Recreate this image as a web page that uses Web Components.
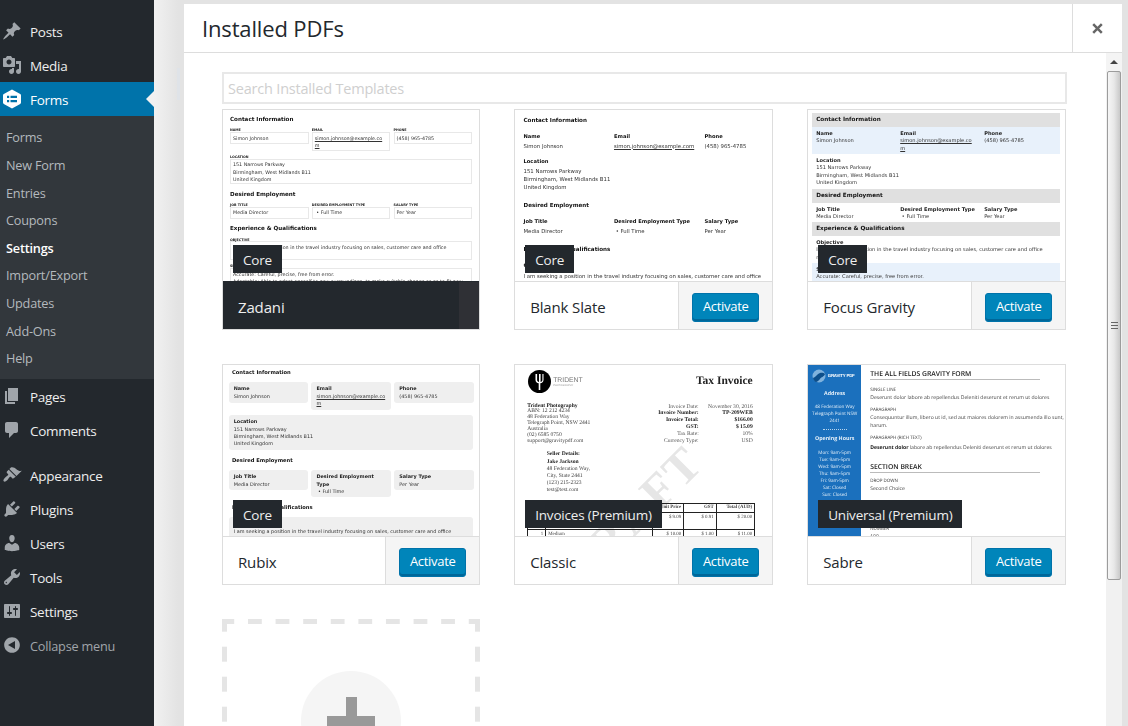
<!DOCTYPE html>
<html>
<head>
<meta charset="utf-8">
<title>Installed PDFs</title>
<style>
  html, body { margin: 0; height: 100%; overflow: hidden; }
  body { display: flex; font-family: "Open Sans", sans-serif; background: #e4e4e4; }
</style>
</head>
<body>
<wp-sidebar>
  <wp-menu-item icon="posts">Posts</wp-menu-item>
  <wp-menu-item icon="media">Media</wp-menu-item>
  <wp-menu-item icon="forms" current>Forms</wp-menu-item>
  <wp-submenu>
    <wp-submenu-item>Forms</wp-submenu-item>
    <wp-submenu-item>New Form</wp-submenu-item>
    <wp-submenu-item>Entries</wp-submenu-item>
    <wp-submenu-item>Coupons</wp-submenu-item>
    <wp-submenu-item current>Settings</wp-submenu-item>
    <wp-submenu-item>Import/Export</wp-submenu-item>
    <wp-submenu-item>Updates</wp-submenu-item>
    <wp-submenu-item>Add-Ons</wp-submenu-item>
    <wp-submenu-item>Help</wp-submenu-item>
  </wp-submenu>
  <wp-menu-item icon="pages">Pages</wp-menu-item>
  <wp-menu-item icon="comments" last>Comments</wp-menu-item>
  <wp-menu-item icon="appearance">Appearance</wp-menu-item>
  <wp-menu-item icon="plugins">Plugins</wp-menu-item>
  <wp-menu-item icon="users">Users</wp-menu-item>
  <wp-menu-item icon="tools">Tools</wp-menu-item>
  <wp-menu-item icon="settings">Settings</wp-menu-item>
  <wp-menu-item icon="collapse" muted>Collapse menu</wp-menu-item>
</wp-sidebar>

<pdf-backdrop>
  <pdf-modal heading="Installed PDFs">
    <pdf-search placeholder="Search Installed Templates"></pdf-search>
    <pdf-grid>
      <pdf-card name="Zadani" tag="Core" active><pdf-doc layout="zadani"></pdf-doc></pdf-card>
      <pdf-card name="Blank Slate" tag="Core"><pdf-doc layout="blank"></pdf-doc></pdf-card>
      <pdf-card name="Focus Gravity" tag="Core"><pdf-doc layout="focus"></pdf-doc></pdf-card>
      <pdf-card name="Rubix" tag="Core"><pdf-doc layout="rubix"></pdf-doc></pdf-card>
      <pdf-card name="Classic" tag="Invoices (Premium)"><pdf-doc layout="classic"></pdf-doc></pdf-card>
      <pdf-card name="Sabre" tag="Universal (Premium)"><pdf-doc layout="sabre"></pdf-doc></pdf-card>
      <pdf-add></pdf-add>
    </pdf-grid>
  </pdf-modal>
</pdf-backdrop>

<script>
const ICONS = {
  posts: 'M10.44 3.02l1.82-1.82 6.36 6.35-1.83 1.82c-1.05-.68-2.48-.57-3.41.36l-.75.75c-.92.93-1.04 2.35-.35 3.41l-1.83 1.82-2.41-2.41-2.8 2.79c-.42.42-3.38 2.71-3.8 2.29s1.86-3.39 2.28-3.81l2.79-2.79L4.1 9.36l1.83-1.82c1.05.69 2.48.57 3.4-.36l.75-.75c.93-.92 1.05-2.35.36-3.41z',
  media: 'M13 11V4c0-.55-.45-1-1-1h-1.67L9 1H5L3.67 3H2c-.55 0-1 .45-1 1v7c0 .55.45 1 1 1h10c.55 0 1-.45 1-1zM7 4.5c1.38 0 2.5 1.12 2.5 2.5S8.38 9.5 7 9.5 4.5 8.38 4.5 7 5.62 4.5 7 4.5zM14 6h5v10.5c0 1.38-1.12 2.5-2.5 2.5S14 17.88 14 16.5s1.12-2.5 2.5-2.5c.17 0 .34.02.5.05V9h-3V6zm-4 8.05V13h2v3.5c0 1.38-1.12 2.5-2.5 2.5S7 17.88 7 16.5 8.12 14 9.5 14c.17 0 .34.02.5.05z',
  forms: 'M10 0.5 L18.2 5 Q19 5.5 19 6.4 V13.6 Q19 14.5 18.2 15 L10 19.5 L1.8 15 Q1 14.5 1 13.6 V6.4 Q1 5.5 1.8 5 Z M5 6.8 V9 H7.2 V6.8 Z M8.5 6.8 V9 H15 V6.8 Z M5 11 V13.2 H7.2 V11 Z M8.5 11 V13.2 H15 V11 Z',
  pages: 'M6 15V2h10v13H6zm-1 1h8v2H3V5h2v11z',
  comments: 'M5 2h9c1.1 0 2 .9 2 2v7c0 1.1-.9 2-2 2h-2l-5 5v-5H5c-1.1 0-2-.9-2-2V4c0-1.1.9-2 2-2z',
  appearance: 'M14.48 11.06L7.41 3.99l1.5-1.5c.5-.56 2.3-.47 3.51.32 1.21.8 1.43 1.28 2.91 2.1 1.18.64 2.45 1.26 4.45.85zm-.71.71L6.7 4.7 4.93 6.47c-.39.39-.39 1.02 0 1.41l1.06 1.06c.39.39.39 1.03 0 1.42-.6.6-1.43 1.11-2.21 1.69-.35.26-.7.53-1.01.84-1.34 1.34-1.72 2.75-1.03 3.44.69.69 2.1.31 3.44-1.03.31-.31.58-.66.85-1.01.58-.78 1.09-1.61 1.69-2.21.39-.39 1.02-.39 1.41 0l1.06 1.06c.39.39 1.02.39 1.41 0z',
  plugins: 'M13.11 4.36L9.87 7.6 8 5.73l3.24-3.24c.35-.34 1.05-.2 1.56.32.52.51.66 1.21.31 1.55zm-8 1.77l.91-1.12 9.01 9.01-1.19.84c-.71.71-2.63 1.16-3.82 1.16H6.14L4.9 17.26c-.59.59-1.54.59-2.12 0-.59-.58-.59-1.53 0-2.12l1.24-1.24v-3.88c0-1.13.4-3.19 1.09-3.89zm7.26 3.97l3.24-3.24c.34-.35 1.04-.21 1.55.31.52.51.66 1.21.31 1.55l-3.24 3.25z',
  users: 'M10 9.25c-2.27 0-2.73-3.44-2.73-3.44C7 4.02 7.82 2 9.96 2c2.15 0 2.97 2.02 2.7 3.81 0 0-.39 3.44-2.66 3.44zm0 2.57L12.72 10c2.39 0 4.52 2.33 4.52 4.53v2.49s-3.65 1.13-7.24 1.13c-3.65 0-7.24-1.13-7.24-1.13v-2.49c0-2.25 1.94-4.48 4.47-4.48z',
  tools: 'M16.68 9.77c-1.34 1.34-3.3 1.67-4.95.99l-5.41 6.52c-.99.99-2.59.99-3.57 0-.99-.98-.99-2.58 0-3.57l6.52-5.42c-.68-1.65-.35-3.61.99-4.95 1.28-1.28 3.12-1.62 4.72-1.06l-2.89 2.89 2.82 2.82 2.86-2.87c.53 1.58.18 3.39-1.09 4.65zM4.74 15.95c.27-.27.27-.71 0-.98s-.71-.27-.98 0-.27.71 0 .98.71.27.98 0z',
  settings: 'M18 16V4c0-.55-.45-1-1-1H3c-.55 0-1 .45-1 1v12c0 .55.45 1 1 1h14c.55 0 1-.45 1-1zM8 11h1c.55 0 1 .45 1 1s-.45 1-1 1H8v1.5c0 .28-.22.5-.5.5s-.5-.22-.5-.5V13H6c-.55 0-1-.45-1-1s.45-1 1-1h1V5.5c0-.28.22-.5.5-.5s.5.22.5.5V11zm5-2h-1c-.55 0-1-.45-1-1s.45-1 1-1h1V5.5c0-.28.22-.5.5-.5s.5.22.5.5V7h1c.55 0 1 .45 1 1s-.45 1-1 1h-1v5.5c0 .28-.22.5-.5.5s-.5-.22-.5-.5V9z',
  collapse: 'M10 2.16c4.33 0 7.84 3.51 7.84 7.84S14.33 17.84 10 17.84 2.16 14.33 2.16 10 5.67 2.16 10 2.16zm3 11.84V6l-7 4z'
};

class WpSidebar extends HTMLElement {
  constructor() {
    super();
    this.attachShadow({ mode: 'open' });
    this.shadowRoot.innerHTML = `
      <style>
        :host { display: block; flex: none; width: 154px; height: 100%; padding-top: 14px; box-sizing: border-box; background: #23282d; }
      </style>
      <slot></slot>`;
  }
}

class WpMenuItem extends HTMLElement {
  constructor() {
    super();
    this.attachShadow({ mode: 'open' });
    const icon = ICONS[this.getAttribute('icon')];
    this.shadowRoot.innerHTML = `
      <style>
        :host { display: flex; align-items: flex-start; height: 34px; position: relative; color: #eee; font: 13.5px/36px "Open Sans", sans-serif; letter-spacing: -.3px; }
        :host([last]) { margin-bottom: 11px; }
        :host([current]) { background: #0073aa; color: #fff; }
        :host([muted]) { color: #a0a5aa; font-size: 12.7px; letter-spacing: -.2px; }
        svg { flex: none; width: 20px; height: 20px; margin: 7px 8px 0 2px; fill: #a0a5aa; fill-rule: evenodd; }
        :host([current]) svg { fill: #fff; }
        :host([current])::after { content: ""; position: absolute; right: 0; top: 9px; border: 8px solid transparent; border-right-color: #f1f1f1; border-left-width: 0; }
      </style>
      <svg viewBox="0 0 20 20"><path d="${icon}"/></svg><slot></slot>`;
  }
}

class WpSubmenu extends HTMLElement {
  constructor() {
    super();
    this.attachShadow({ mode: 'open' });
    this.shadowRoot.innerHTML = `
      <style>
        :host { display: block; padding: 7.4px 0 7.2px; background: #32373c; }
      </style>
      <slot></slot>`;
  }
}

class WpSubmenuItem extends HTMLElement {
  constructor() {
    super();
    this.attachShadow({ mode: 'open' });
    this.shadowRoot.innerHTML = `
      <style>
        :host { display: block; height: 27.6px; padding-left: 6px; color: #b4b9be; font: 12.7px/29.5px "Open Sans", sans-serif; letter-spacing: -.2px; }
        :host([current]) { color: #fff; font-weight: 600; }
      </style>
      <slot></slot>`;
  }
}

class PdfBackdrop extends HTMLElement {
  constructor() {
    super();
    this.attachShadow({ mode: 'open' });
    this.shadowRoot.innerHTML = `
      <style>
        :host { display: block; flex: 1; min-width: 0; height: 100%; padding: 4px 6px 0 30px; box-sizing: border-box; position: relative;
                background: linear-gradient(to right, #f1f1f1, #e3e3e3 24px); }
        .ghost { position: absolute; left: 23px; top: 68px; width: 3px; height: 32px; background: #dfe3e8; }
      </style>
      <div class="ghost"></div>
      <slot></slot>`;
  }
}

class PdfModal extends HTMLElement {
  constructor() {
    super();
    this.attachShadow({ mode: 'open' });
    this.shadowRoot.innerHTML = `
      <style>
        :host { display: flex; flex-direction: column; height: 100%; background: #fff; overflow: hidden; }
        header { flex: none; display: flex; height: 48px; border-bottom: 1px solid #ddd; }
        h1 { flex: 1; margin: 0; padding-left: 18px; font: 400 22px/48px "Open Sans", sans-serif; letter-spacing: -.15px; color: #23282d; }
        .close { flex: none; display: flex; align-items: center; justify-content: center; width: 49px; border-left: 1px solid #ddd; }
        .close svg { width: 11px; height: 11px; margin-right: 1px; }
        .body { flex: 1; min-height: 0; display: flex; }
        .content { flex: 1; min-width: 0; padding: 19px 39px 0 38px; overflow: hidden; }
      </style>
      <header>
        <h1>${this.getAttribute('heading')}</h1>
        <div class="close"><svg viewBox="0 0 11 11"><path d="M1.2 1.2l8.6 8.6M9.8 1.2l-8.6 8.6" stroke="#666" stroke-width="2.5" fill="none"/></svg></div>
      </header>
      <div class="body">
        <div class="content"><slot></slot></div>
        <classic-scrollbar></classic-scrollbar>
      </div>`;
  }
}

class ClassicScrollbar extends HTMLElement {
  constructor() {
    super();
    this.attachShadow({ mode: 'open' });
    this.shadowRoot.innerHTML = `
      <style>
        :host { display: block; flex: none; width: 16px; background: #f1f1f1; }
        .arrow { height: 18px; display: flex; align-items: center; justify-content: center; background: #f4f4f4; }
        .arrow i { border: 4px solid transparent; border-top-width: 0; border-bottom-color: #444; }
        .thumb { height: 509px; margin: 0 1px 0 1px; box-sizing: border-box; border: 1px solid #9c9c9c; border-radius: 2px;
                 background: linear-gradient(to right, #f6f6f6, #e8e8e8 50%, #c9c9c9);
                 display: flex; align-items: center; justify-content: center; }
        .grip { width: 7px; height: 7px; background: repeating-linear-gradient(to bottom, #666 0 1px, transparent 1px 3px); }
      </style>
      <div class="arrow"><i></i></div>
      <div class="thumb"><div class="grip"></div></div>`;
  }
}

class PdfSearch extends HTMLElement {
  constructor() {
    super();
    this.attachShadow({ mode: 'open' });
    this.shadowRoot.innerHTML = `
      <style>
        :host { display: block; margin-bottom: 5px; }
        input { display: block; width: 100%; height: 32px; box-sizing: border-box; padding: 1px 4px 0; margin: 0; border: 2px solid #e8e8e8; outline: 0; background: #fff;
                font: 14.5px "Open Sans", sans-serif; letter-spacing: -.2px; color: #333; }
        input::placeholder { color: #cfcfcf; opacity: 1; }
      </style>
      <input type="text" placeholder="${this.getAttribute('placeholder')}">`;
  }
}

class PdfGrid extends HTMLElement {
  constructor() {
    super();
    this.attachShadow({ mode: 'open' });
    this.shadowRoot.innerHTML = `
      <style>
        :host { display: grid; grid-template-columns: 258.2px 259px 259px; column-gap: 34px; row-gap: 34px; }
      </style>
      <slot></slot>`;
  }
}

class PdfCard extends HTMLElement {
  constructor() {
    super();
    this.attachShadow({ mode: 'open' });
    const active = this.hasAttribute('active');
    this.shadowRoot.innerHTML = `
      <style>
        :host { display: flex; flex-direction: column; height: 221px; box-sizing: border-box; border: 1px solid #ddd; background: #fff; overflow: hidden; }
        .thumb { flex: none; height: 171px; position: relative; overflow: hidden; }
        .tag { position: absolute; left: 10px; top: 135px; height: 28px; padding: 0 10px; background: #23282d; color: #eee; font: 13.5px/30px "Open Sans", sans-serif; letter-spacing: -.2px; white-space: nowrap; }
        footer { flex: 1; display: flex; border-top: 1px solid #ddd; }
        .name { flex: 1; padding-left: 15px; font: 15px/50px "Open Sans", sans-serif; letter-spacing: -.15px; color: #23282d; }
        .actions { flex: none; display: flex; align-items: center; justify-content: center; width: 93px; border-left: 1px solid #ddd; background: #f5f5f5; }
        button { width: 67px; height: 29px; padding: 0 0 2px; margin: 0; border: 1px solid #0073aa; border-radius: 3px; background: #0085ba; box-shadow: inset 0 -2px 0 #006799;
                 color: #fff; font: 13px/25px "Open Sans", sans-serif; letter-spacing: -.3px; }
        :host([active]) footer { background: #23282d; border-top-color: #23282d; }
        :host([active]) .name { color: #eee; }
        :host([active]) .actions { width: 20px; border-left: 0; background: #2f3035; }
      </style>
      <div class="thumb">
        <slot></slot>
        <div class="tag">${this.getAttribute('tag')}</div>
      </div>
      <footer>
        <div class="name">${this.getAttribute('name')}</div>
        <div class="actions">${active ? '' : '<button>Activate</button>'}</div>
      </footer>`;
  }
}

class PdfAdd extends HTMLElement {
  constructor() {
    super();
    this.attachShadow({ mode: 'open' });
    // the dash rhythm is uneven between the sides, so gradients rather than border: dashed
    this.shadowRoot.innerHTML = `
      <style>
        :host { display: flex; justify-content: center; height: 221px; box-sizing: border-box; padding-top: 52px;
                background:
                  linear-gradient(to right, #e5e5e5 14px, transparent 14px) -1.6px 0 / 27.6px 5px repeat-x,
                  linear-gradient(to right, #e5e5e5 14px, transparent 14px) -1.6px 100% / 27.6px 5px repeat-x,
                  linear-gradient(to bottom, #e5e5e5 15px, transparent 15px) 0 -2.3px / 5px 30px repeat-y,
                  linear-gradient(to bottom, #e5e5e5 15px, transparent 15px) 100% -2.3px / 5px 30px repeat-y; }
        .circle { width: 100px; height: 100px; border-radius: 50%; background: #f5f5f5; display: flex; align-items: center; justify-content: center; }
        .plus { width: 48px; height: 48px; background:
                  linear-gradient(#999, #999) center / 11px 100% no-repeat,
                  linear-gradient(#999, #999) center / 100% 11px no-repeat; }
      </style>
      <div class="circle"><div class="plus"></div></div>`;
  }
}

const FIELDS = {
  email: 'simon.johnson@example.co<br>m',
  emailFull: 'simon.johnson@example.com',
  address: '151 Narrows Parkway<br>Birmingham, West Midlands B11<br>United Kingdom',
  seeking: 'I am seeking a position in the travel industry focusing on sales, customer care and office',
  accurate: 'Accurate: Careful, precise, free from error.'
};

const DOC_LAYOUTS = {
  zadani: () => `
    <div class="zadani">
      <h4 style="margin-top:5px">Contact Information</h4>
      <div class="row" style="margin-top:4.3px">
        <div class="f"><label>NAME</label><p>Simon Johnson</p></div>
        <div class="f"><label>EMAIL</label><p style="height:19px"><u>${FIELDS.email}</u></p></div>
        <div class="f"><label>PHONE</label><p>(458) 965-4785</p></div>
      </div>
      <label style="margin-top:3px">LOCATION</label>
      <p style="height:25.5px;width:242px">${FIELDS.address}</p>
      <h4 style="margin-top:6px">Desired Employment</h4>
      <div class="row" style="margin-top:4px">
        <div class="f"><label>JOB TITLE</label><p>Media Director</p></div>
        <div class="f"><label>DESIRED EMPLOYMENT TYPE</label><p>&nbsp;• Full Time</p></div>
        <div class="f"><label>SALARY TYPE</label><p>Per Year</p></div>
      </div>
      <h4 style="margin-top:5px">Experience &amp; Qualifications</h4>
      <label style="margin-top:4.7px">OBJECTIVE</label>
      <p style="height:19px;width:242px">${FIELDS.seeking}</p>
      <label style="margin-top:3px">SKILLS</label>
      <p style="width:242px;height:30px">${FIELDS.accurate}<br>Adaptable: Able to adapt oneself to new surroundings, to make suitable change so as to fit new</p>
    </div>`,

  blank: () => `
    <div class="blank">
      <h4 style="margin-top:6px">Contact Information</h4>
      <div class="row" style="margin-top:9px">
        <div class="c"><b>Name</b><span>Simon Johnson</span></div>
        <div class="c"><b>Email</b><span><u>${FIELDS.emailFull}</u></span></div>
        <div class="c"><b>Phone</b><span>(458) 965-4785</span></div>
      </div>
      <b style="margin-top:8px">Location</b>
      <span style="margin-top:2.5px;line-height:8px">${FIELDS.address}</span>
      <h4 style="margin-top:10px">Desired Employment</h4>
      <div class="row" style="margin-top:9px">
        <div class="c"><b>Job Title</b><span>Media Director</span></div>
        <div class="c"><b>Desired Employment Type</b><span>&nbsp;• Full Time</span></div>
        <div class="c"><b>Salary Type</b><span>Per Year</span></div>
      </div>
      <h4 style="margin-top:10.5px">Experience &amp; Qualifications</h4>
      <b style="margin-top:8.5px">Objective</b>
      <span style="margin-top:4px">${FIELDS.seeking}</span>
    </div>`,

  focus: () => `
    <div class="focus">
      <h4>Contact Information</h4>
      <div class="row tint" style="height:27px">
        <div class="c"><b>Name</b><span>Simon Johnson</span></div>
        <div class="c"><b>Email</b><span><u>${FIELDS.email}</u></span></div>
        <div class="c"><b>Phone</b><span>(458) 965-4785</span></div>
      </div>
      <div class="cell" style="height:35px"><b>Location</b><span>${FIELDS.address}</span></div>
      <h4>Desired Employment</h4>
      <div class="row" style="height:19px">
        <div class="c"><b>Job Title</b><span>Media Director</span></div>
        <div class="c"><b>Desired Employment Type</b><span>&nbsp;• Full Time</span></div>
        <div class="c"><b>Salary Type</b><span>Per Year</span></div>
      </div>
      <h4>Experience &amp; Qualifications</h4>
      <div class="cell" style="height:27px"><b>Objective</b><span>${FIELDS.seeking}<br>m</span></div>
      <div class="cell tint" style="height:20px"><b>Skills</b><span>${FIELDS.accurate}</span></div>
    </div>`,

  rubix: () => `
    <div class="rubix">
      <h4 style="margin-top:3px">Contact Information</h4>
      <div class="row" style="margin-top:6px">
        <div class="c" style="height:21px"><b>Name</b><span>Simon Johnson</span></div>
        <div class="c" style="height:28px"><b>Email</b><span><u>${FIELDS.email}</u></span></div>
        <div class="c" style="height:21px"><b>Phone</b><span>(458) 965-4785</span></div>
      </div>
      <div class="c wide" style="height:35px;margin-top:5px"><b>Location</b><span>${FIELDS.address}</span></div>
      <h4 style="margin-top:6px">Desired Employment</h4>
      <div class="row" style="margin-top:6px">
        <div class="c" style="height:20px"><b>Job Title</b><span>Media Director</span></div>
        <div class="c" style="height:27px"><b>Desired Employment Type</b><span>&nbsp;• Full Time</span></div>
        <div class="c" style="height:20px"><b>Salary Type</b><span>Per Year</span></div>
      </div>
      <h4 style="margin-top:5.5px">Experience &amp; Qualifications</h4>
      <div class="c wide" style="height:30px;margin-top:6.5px"><b>Objective</b><span>${FIELDS.seeking}</span></div>
    </div>`,

  classic: () => `
    <div class="classic">
      <div class="watermark">DRAFT</div>
      <div class="head">
        <svg class="logo" viewBox="0 0 23 23">
          <circle cx="11.5" cy="11.5" r="11.5" fill="#000"/>
          <path d="M7.5 4v6c0 2 1.5 3 3.2 3.3V20h1.6v-6.7c1.7-.3 3.2-1.3 3.2-3.3V4h-1.1v6c0 1-.8 1.7-1.8 2V4h-1.6v8c-1-.3-1.9-1-1.9-2V4z" fill="#fff" stroke="none"/>
        </svg>
        <div class="brand">TRIDENT<small>PHOTOGRAPHY</small></div>
        <div class="title">Tax Invoice</div>
      </div>
      <div class="meta">
        <div class="addr"><b>Trident Photography</b><br>ABN: 12 212 4234<br>48 Federation Way<br>Telegraph Point, NSW 2441<br>Australia<br>(02) 6585 0750<br>support@gravitypdf.com</div>
        <div class="inv">
          <span>Invoice Date:</span><span>November 30, 2016</span>
          <b>Invoice Number:</b><b>TP-209WEB</b>
          <b>Invoice Total:</b><b>$166.00</b>
          <b>GST:</b><b>$ 15.09</b>
          <span>Tax Rate:</span><span>10%</span>
          <span>Currency Type:</span><span>USD</span>
        </div>
      </div>
      <div class="seller"><b>Seller Details:</b><br><b>Jake Jackson</b><br>48 Federation Way,<br>City, State 2441<br>(123) 215-2323<br>test@test.com</div>
      <table>
        <colgroup><col style="width:18.4px"><col style="width:107px"><col style="width:31px"><col style="width:32.5px"><col style="width:38.5px"></colgroup>
        <tr style="height:9.3px"><th>Qty</th><th>Description</th><th class="r">Unit Price</th><th class="r">GST</th><th class="r">Total (AUD)</th></tr>
        <tr style="height:16.7px;vertical-align:top"><td class="r">2</td><td>Small</td><td class="r">$ 9.09</td><td class="r">$ 0.91</td><td class="r">$ 20.00</td></tr>
        <tr style="height:12px;vertical-align:top"><td class="r">1</td><td>Medium</td><td class="r">$ 10.00</td><td class="r">$ 1.00</td><td class="r">$ 11.00</td></tr>
      </table>
    </div>`,

  sabre: () => `
    <div class="sabre">
      <aside>
        <div class="mark">
          <svg viewBox="0 0 14 14"><circle cx="7" cy="7" r="6.5" fill="#7fb2dd"/><path d="M1 9c3-1 4-4 7-5 2-.7 4 0 5 1-1 3-4 3-5 5-1 1.5-3 3-4 3C2.5 12.5 1.5 11 1 9z" fill="#0d4f8b"/></svg>
          <b>GRAVITY PDF</b>
        </div>
        <strong style="margin-top:6.5px">Address</strong>
        <p style="margin-top:7.5px">48 Federation Way<br>Telegraph Point NSW<br>2441</p>
        <hr>
        <strong style="margin-top:4.5px">Opening Hours</strong>
        <p style="margin-top:8px">Mon: 9am-5pm<br>Tue: 9am-5pm<br>Wed: 9am-5pm<br>Thu: 9am-5pm<br>Fri: 9am-5pm<br>Sat: Closed<br>Sun: Closed</p>
      </aside>
      <main>
        <h5 style="margin-top:5px">THE ALL FIELDS GRAVITY FORM</h5>
        <label style="margin-top:7px">SINGLE LINE</label>
        <p style="margin-top:1.5px">Deserunt dolor labore ab repellendus Deleniti deserunt et rerum ut dolores</p>
        <label style="margin-top:6.5px">PARAGRAPH</label>
        <p style="margin-top:1px;line-height:8px">Consequuntur illum, libero ut id, sed aut maiores dolorem in assumenda illo sunt,<br>harum.</p>
        <label style="margin-top:5px">PARAGRAPH (RICH TEXT)</label>
        <p style="margin-top:4px"><b>Deserunt dolor</b> labore ab repellendus Deleniti deserunt et rerum ut dolores</p>
        <h5 style="margin-top:11.5px">SECTION BREAK</h5>
        <label style="margin-top:5px">DROP DOWN</label>
        <p style="margin-top:2px">Second Choice</p>
        <label style="margin-top:8px">MULTI SELECT</label>
        <label style="margin-top:20px">NUMBER</label>
        <p style="margin-top:2px">100</p>
      </main>
    </div>`
};

class PdfDoc extends HTMLElement {
  constructor() {
    super();
    this.attachShadow({ mode: 'open' });
    this.shadowRoot.innerHTML = `
      <style>
        :host { display: block; height: 171px; overflow: hidden; filter: blur(.3px); color: #222; font-family: "DejaVu Sans", sans-serif; text-rendering: geometricPrecision; }
        * { box-sizing: border-box; }
        h4, h5, p, label { display: block; margin: 0; white-space: nowrap; }
        h4 { padding-top: 1px; margin-bottom: -1px; font-size: 5.6px; line-height: 8px; font-weight: 700; color: #111; }

        .zadani { padding-left: 7px; }
        .zadani .row { display: flex; gap: 3.3px; align-items: flex-start; }
        .zadani .f { width: 78.5px; }
        .zadani label { padding-top: 1px; font-size: 3.3px; line-height: 4px; font-weight: 700; color: #222; margin-bottom: -.3px; }
        .zadani p { height: 12px; padding: 2.5px 2px; border: 1px solid #e8e8e8; font-size: 4.8px; line-height: 7.3px; color: #333; }

        .blank { padding: 1px 0 0 8.3px; }
        .blank h4 { padding-top: 0; margin-bottom: 0; }
        .blank .row { display: flex; }
        .blank .c { flex: none; width: 90.5px; }
        .blank b, .blank span { display: block; white-space: nowrap; line-height: 7px; }
        .blank b { font-size: 5.2px; color: #111; }
        .blank .c span { margin-top: 2.5px; }
        .blank span { font-size: 5.35px; color: #333; }

        .focus { margin: 3px 5px 0 4px; }
        .focus h4 { height: 14px; padding: 0 0 0 4px; margin: 0; line-height: 15px; background: #e0e0e0; font-size: 5.7px; }
        .focus .row { display: flex; padding-left: 4px; }
        .focus .c { flex: none; width: 84px; }
        .focus .tint { background: #e8f1fb; }
        .focus .cell { padding-left: 4px; overflow: hidden; }
        .focus b, .focus span { display: block; white-space: nowrap; font-size: 5.1px; line-height: 7.3px; }
        .focus .c, .focus .cell { padding-top: 4px; }
        .focus span { color: #333; }

        .rubix { padding-left: 5.7px; }
        .rubix h4 { padding-left: 3.3px; font-size: 5.2px; }
        .rubix .row { display: flex; gap: 3.5px; align-items: flex-start; }
        .rubix .c { width: 79.3px; padding: 4.3px 5px 0; background: #efefef; border-radius: 3px; }
        .rubix .c.wide { width: 244.5px; }
        .rubix b, .rubix span { display: block; font-size: 4.9px; line-height: 7.3px; }
        .rubix .wide span { white-space: nowrap; }
        .rubix span { color: #333; }

        .classic { position: relative; height: 171px; padding: 5px 19.5px 0 12px; font-family: "Liberation Serif", serif; font-size: 5.6px; line-height: 5.85px; color: #444; }
        .classic .watermark { position: absolute; left: 37px; top: 144px; width: 130px; text-align: center; font-size: 48px; line-height: 48px; font-weight: 700; color: #e6e6e6; transform: rotate(-45deg); letter-spacing: 2px; }
        .classic .head, .classic .meta, .classic .seller, .classic table { position: relative; }
        .classic .head { display: flex; align-items: center; height: 23px; }
        .classic .logo { flex: none; width: 23px; height: 23px; margin: 0 2px 0 1px; }
        .classic .brand { flex: 1; font: 200 6.8px/7px "Liberation Sans", sans-serif; color: #777; }
        .classic .brand small { display: block; font-size: 2.6px; line-height: 3px; color: #999; }
        .classic .title { font-size: 11.5px; line-height: 23px; font-weight: 700; color: #222; }
        .classic .meta { display: flex; justify-content: space-between; margin-top: 10.5px; }
        .classic .addr b, .classic .seller b { color: #222; }
        .classic .inv { display: grid; grid-template-columns: auto 54px; text-align: right; line-height: 6.9px; color: #555; }
        .classic .inv b { color: #222; }
        .classic .seller { margin: 6.5px 0 0 19.5px; line-height: 7.2px; }
        .classic table { margin: 8px 0 0 -.4px; width: 227.4px; table-layout: fixed; border-collapse: collapse; font-size: 4.9px; line-height: 6px; }
        .classic th, .classic td { padding: 1px 2px; border: 1px solid #222; white-space: nowrap; overflow: hidden; text-align: left; }
        .classic td { padding-top: 2.5px; }
        .classic .r { text-align: right; }

        .sabre { display: flex; height: 171px; font-family: "Open Sans", sans-serif; }
        .sabre aside { flex: none; width: 53px; padding-top: 4px; background: #1b70bd; color: #e3eef8; text-align: center; font-size: 4.6px; line-height: 7px; }
        .sabre .mark { display: flex; align-items: center; gap: 1.5px; height: 14px; padding-left: 4px; white-space: nowrap; }
        .sabre .mark svg { flex: none; width: 14px; height: 14px; }
        .sabre .mark b { font: 700 4.4px/14px "Liberation Sans", sans-serif; letter-spacing: -.2px; color: #fff; }
        .sabre strong { display: block; font-size: 5.3px; line-height: 7px; }
        .sabre aside p { margin: 0; white-space: nowrap; }
        .sabre hr { width: 24px; height: 0; margin: 4px auto 0; border: 0; border-top: 1px dotted #b8d4ec; }
        .sabre main { flex: 1; min-width: 0; padding-left: 9px; overflow: hidden; }
        .sabre h5 { width: 170px; padding-bottom: 1px; border-bottom: 1.5px solid #bbb; font-size: 6.8px; line-height: 8px; font-weight: 600; color: #222; }
        .sabre label { font-size: 4.5px; line-height: 6px; color: #333; }
        .sabre main p { font-size: 5.1px; line-height: 6px; color: #444; }
        .sabre main b { color: #222; }
      </style>
      ${DOC_LAYOUTS[this.getAttribute('layout')]()}`;
  }
}

customElements.define('wp-sidebar', WpSidebar);
customElements.define('wp-menu-item', WpMenuItem);
customElements.define('wp-submenu', WpSubmenu);
customElements.define('wp-submenu-item', WpSubmenuItem);
customElements.define('pdf-backdrop', PdfBackdrop);
customElements.define('pdf-modal', PdfModal);
customElements.define('classic-scrollbar', ClassicScrollbar);
customElements.define('pdf-search', PdfSearch);
customElements.define('pdf-grid', PdfGrid);
customElements.define('pdf-card', PdfCard);
customElements.define('pdf-add', PdfAdd);
customElements.define('pdf-doc', PdfDoc);
</script>
</body>
</html>
